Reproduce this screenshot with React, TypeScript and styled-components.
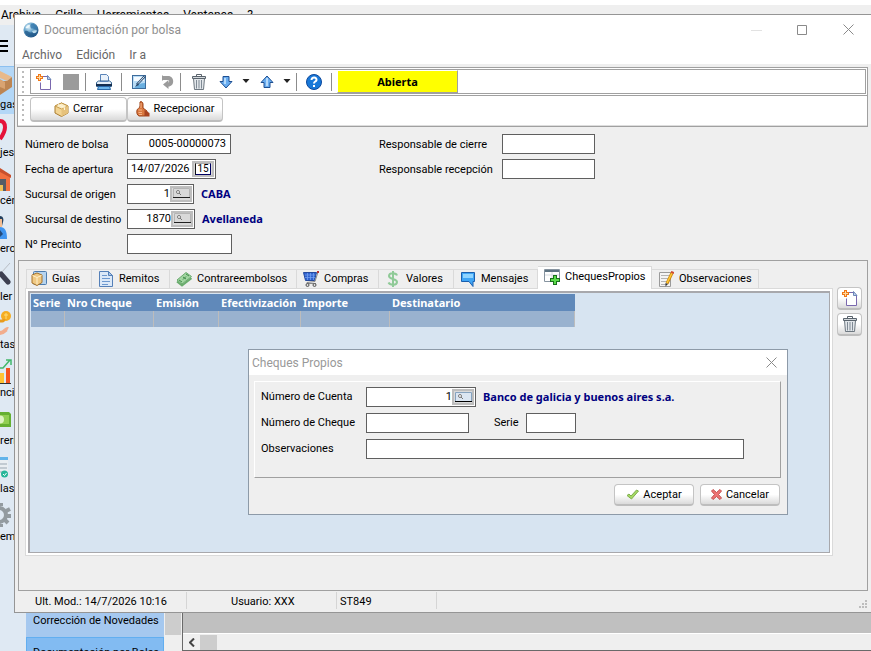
import React from "react";
import styled, { createGlobalStyle, css } from "styled-components";

const GlobalStyle = createGlobalStyle`
  * { box-sizing: border-box; }
  body { margin: 0; overflow: hidden; }
  button, input { font: inherit; color: inherit; }
`;

const uiFont = `Roboto, sans-serif`;
const boldFont = `"Noto Sans", sans-serif`;
const titleFont = `Roboto, sans-serif`;
const line = "#a0a0a0";

/* ---------- Main application shell ---------- */

const Shell = styled.div`
  position: relative;
  display: flex;
  flex-direction: column;
  height: 100vh;
  overflow: hidden;
  background: #efefef;
  color: #000;
  font: 11px/16px ${uiFont};
  white-space: nowrap;
`;

const TopStrip = styled.div`
  height: 5px;
  flex: none;
  background: #fff;
`;

const MainMenu = styled.nav`
  display: flex;
  flex: none;
  gap: 14px;
  height: 20px;
  padding: 1px;
  font: 12px/18px ${titleFont};
`;

const MenuLink = styled.button`
  padding: 0;
  border: 0;
  background: none;
  line-height: 18px;
`;

const Body = styled.div`
  display: flex;
  flex: 1;
  min-height: 0;
`;

const Sidebar = styled.nav`
  width: 26px;
  flex: none;
  background: #dfe9f3;
  overflow: hidden;
`;

const Burger = styled.button`
  display: flex;
  flex-direction: column;
  gap: 3px;
  width: 100%;
  height: 41px;
  padding: 15px 0 0;
  border: 0;
  background: none;
  i { width: 8px; height: 2px; background: #000; }
`;

const SideItem = styled.button<{ $active?: boolean }>`
  display: flex;
  flex-direction: column;
  align-items: flex-start;
  width: 100%;
  height: 48px;
  padding: 4px 0 0;
  border: 0;
  border-top: 1px solid ${(p) => (p.$active ? "#8cc0f0" : "transparent")};
  background: ${(p) => (p.$active ? "#b3d7f7" : "none")};
  line-height: 14px;
  svg { flex: none; }
`;

const Workspace = styled.div`
  display: flex;
  flex: 1;
  min-width: 0;
  align-items: flex-end;
`;

const TaskList = styled.div`
  width: 138px;
  height: 38px;
  flex: none;
  overflow: hidden;
`;

const TaskItem = styled.button<{ $selected?: boolean }>`
  display: flex;
  align-items: flex-start;
  width: 100%;
  height: 24px;
  padding: 0 7px;
  border: 0;
  background: #a5c8ef;
  ${(p) =>
    p.$selected &&
    css`
      border: 1px solid #62aef0;
      background: #82bbf2;
      padding: 7px 6px 0;
    `}
`;

const ListScroll = styled.div`
  width: 18px;
  height: 38px;
  flex: none;
  padding: 0 1px;
  &::before { content: ""; display: block; height: 22px; background: #cdcdcd; }
`;

const Canvas = styled.div`
  flex: 1;
  height: 38px;
  border-left: 1px solid #696969;
  border-bottom: 1px solid #696969;
  background: #c0c0c0;
  padding-top: 20px;
`;

const HScroll = styled.div`
  display: flex;
  align-items: center;
  height: 17px;
  border-top: 1px solid #fff;
  background: #efefef;
`;

const ScrollArrow = styled.button`
  display: flex;
  justify-content: center;
  width: 17px;
  padding: 0;
  border: 0;
  background: none;
`;

const ScrollThumb = styled.div`
  width: 17px;
  height: 15px;
  background: #cdcdcd;
`;

/* ---------- Document window ---------- */

const DocWindow = styled.section`
  position: absolute;
  top: 14px;
  left: 14px;
  right: 0;
  bottom: 38px;
  display: flex;
  flex-direction: column;
  border: 1px solid #959595;
  border-right: 0;
  background: #efefef;
`;

const TitleBar = styled.header`
  display: flex;
  align-items: center;
  flex: none;
  gap: 5px;
  height: 30px;
  padding: 0 17px 0 8px;
  background: #fff;
  color: #8f8f8f;
  font: 12px/16px ${titleFont};
`;

const TitleText = styled.h1`
  flex: 1;
  margin: 0;
  font: inherit;
`;

const WindowControls = styled.div`
  display: flex;
  gap: 34px;
`;

const ControlButton = styled.button`
  display: flex;
  padding: 0;
  border: 0;
  background: none;
  color: #8f8f8f;
`;

const WindowMenu = styled.nav`
  display: flex;
  flex: none;
  gap: 14px;
  height: 19px;
  padding-left: 7px;
  background: #fff;
  color: #666;
  font: 12px/19px ${titleFont};
`;

const Toolbars = styled.div`
  flex: none;
  margin: 3px 3px 0 2px;
  border: 1px solid ${line};
  background: #fff;
`;

const ToolRow = styled.div<{ $last?: boolean }>`
  display: flex;
  height: 28px;
  padding: 1px 1px 1px 3px;
  ${(p) => !p.$last && css`border-bottom: 1px solid ${line};`}
  ${(p) => p.$last && css`height: 30px; padding-bottom: 3px; border-bottom: 1px solid #ddd;`}
`;

const Grip = styled.i`
  width: 4px;
  margin: 2px 5px 1px 0;
  flex: none;
  background: repeating-linear-gradient(#bcbcbc 0 2px, transparent 2px 5px);
  background-size: 2px 100%;
  background-repeat: no-repeat;
  background-position: 1px 0;
`;

const ToolBox = styled.div`
  display: flex;
  align-items: center;
  flex: 1;
  border: 1px solid ${line};
`;

const ToolButton = styled.button<{ $w: number }>`
  display: flex;
  align-items: center;
  justify-content: center;
  width: ${(p) => p.$w}px;
  height: 22px;
  padding: 0;
  border: 0;
  background: none;
`;

const Separator = styled.i`
  width: 1px;
  height: 18px;
  background: #8c8c8c;
`;

const StatusBadge = styled.output`
  width: 121px;
  height: 23px;
  margin-left: 5px;
  border: 1px solid ${line};
  border-top-color: #fff;
  border-left-color: #fff;
  background: #ff0;
  font: bold 11px/22px ${boldFont};
  text-align: center;
`;

const SoftButton = styled.button<{ $w: number; $h: number }>`
  display: flex;
  align-items: center;
  justify-content: center;
  gap: 4px;
  width: ${(p) => p.$w}px;
  height: ${(p) => p.$h}px;
  padding: 0;
  border: 1px solid #c4c4c4;
  border-bottom: 2px solid #bdbdbd;
  border-radius: 4px;
  background: linear-gradient(#fff 50%, #dadada);
  line-height: 16px;
`;

const HeaderForm = styled.form`
  display: grid;
  grid-template-columns: 102px 252px 123px 1fr;
  grid-auto-rows: 25px;
  align-items: center;
  flex: none;
  margin: 4px 0 0 2px;
  padding: 0 8px 0 8px;
  > label { padding-top: 2px; }
`;

const Field = styled.div`
  display: flex;
  align-items: center;
  gap: 7px;
`;

const TextInput = styled.input<{ $w: number; $right?: boolean }>`
  width: ${(p) => p.$w}px;
  height: 20px;
  padding: 0 4px;
  border: 1px solid #5f5f5f;
  background: #fff;
  text-align: ${(p) => (p.$right ? "right" : "left")};
`;

const Combined = styled.span<{ $w: number }>`
  display: flex;
  align-items: center;
  width: ${(p) => p.$w}px;
  height: 20px;
  padding-right: 1px;
  border: 1px solid #5f5f5f;
  background: #fff;
`;

const BareInput = styled.input<{ $right?: boolean }>`
  flex: 1;
  min-width: 0;
  width: 0;
  height: 16px;
  padding: 0 0 0 ${(p) => (p.$right ? 0 : 3)}px;
  border: 0;
  background: transparent;
  text-align: ${(p) => (p.$right ? "right" : "left")};
`;

const InnerButton = styled.button`
  display: flex;
  align-items: center;
  justify-content: center;
  width: 22px;
  height: 16px;
  padding: 0;
  border: 2px solid #bebebe;
  background: #dadada;
`;

const Bound = styled.strong`
  color: #000080;
  font: bold 11px/16px ${boldFont};
`;

const TabFrame = styled.div`
  display: flex;
  flex: 1;
  min-height: 0;
  gap: 4px;
  margin: 4px 3px 1px 3px;
  padding: 5px 5px 34px 6px;
  border: 1px solid ${line};
`;

const TabArea = styled.div`
  display: flex;
  flex-direction: column;
  flex: 1;
  min-width: 0;
`;

const TabStrip = styled.div`
  display: flex;
  align-items: flex-end;
  flex: none;
  height: 22px;
  padding-left: 1px;
`;

const Tab = styled.button<{ $w: number; $active?: boolean }>`
  display: flex;
  align-items: center;
  gap: 5px;
  width: ${(p) => p.$w}px;
  height: 19px;
  padding: 0 0 0 6px;
  border: 1px solid #dadada;
  border-width: 1px 1px 0 0;
  background: #efefef;
  line-height: 16px;
  &:first-child { border-left-width: 1px; padding-left: 4px; }
  ${(p) =>
    p.$active &&
    css`
      height: 23px;
      margin-bottom: -1px;
      padding-bottom: 2px;
      background: #fff;
      z-index: 1;
    `}
`;

const TabIcon = styled.span`
  display: flex;
  justify-content: center;
  width: 16px;
  flex: none;
`;

const TabPage = styled.div`
  flex: 1;
  min-height: 0;
  padding: 2px;
  border: 1px solid #dadada;
  background: #fff;
`;

const Grid = styled.div`
  height: 100%;
  padding: 1px;
  border: 1px solid #a8a8ac;
  border-width: 2px 1px 1px 2px;
  background: #d7e4f1;
`;

const Table = styled.table`
  width: 544px;
  border-collapse: separate;
  border-spacing: 0;
  table-layout: fixed;
`;

const HeadCell = styled.th`
  height: 17px;
  padding: 0 0 0 2px;
  background: #6089ba;
  color: #fff;
  font: bold 11px/17px ${boldFont};
  text-align: left;
`;

const Cell = styled.td`
  height: 16px;
  padding: 0;
  border-right: 1px solid #bcbcbc;
  background: #99b2cf;
`;

const SideActions = styled.div`
  display: flex;
  flex-direction: column;
  gap: 3px;
  padding-top: 21px;
`;

const StatusBar = styled.footer`
  display: grid;
  grid-template-columns: 152px 150px 100px 1fr;
  flex: none;
  height: 20px;
  margin: 0 4px 0 20px;
`;

const StatusCell = styled.span<{ $pad?: number }>`
  height: 17px;
  padding-left: ${(p) => p.$pad ?? 0}px;
  border-right: 1px solid #d5d5d5;
  line-height: 20px;
`;

const SizeGrip = styled.span`
  display: flex;
  justify-content: flex-end;
  align-items: flex-end;
  padding-bottom: 4px;
`;

/* ---------- Dialog ---------- */

const Dialog = styled.section`
  position: absolute;
  top: 349px;
  left: 248px;
  width: 540px;
  border: 1px solid #8d9aa8;
  background: #efefef;
`;

const DialogTitle = styled.header`
  display: flex;
  align-items: center;
  justify-content: space-between;
  height: 25px;
  padding: 0 10px 0 3px;
  background: #fff;
  color: #999;
  font: 12px/16px ${titleFont};
`;

const DialogHeading = styled.h2`
  margin: 0;
  font: inherit;
`;

const Panel = styled.div`
  display: grid;
  grid-template-columns: 105px 1fr;
  grid-auto-rows: 26px;
  align-items: center;
  margin: 6px 6px 0 5px;
  padding: 2px 6px 15px;
  border: 1px solid ${line};
  border-top-color: #fff;
  border-left-color: #fff;
`;

const SeriesLabel = styled.label`
  margin-left: 18px;
`;

const Actions = styled.div`
  display: flex;
  justify-content: flex-end;
  gap: 6px;
  padding: 6px 7px 8px;
`;

/* ---------- Icons ---------- */

const Svg = ({ w = 16, h = w, children }: { w?: number; h?: number; children: React.ReactNode }) => (
  <svg width={w} height={h} viewBox={`0 0 ${w} ${h}`} fill="none" aria-hidden="true">{children}</svg>
);

const GlobeIcon = () => (
  <Svg>
    <defs>
      <radialGradient id="globe" cx=".35" cy=".3" r=".8">
        <stop offset="0" stopColor="#e4f3fa" /><stop offset=".4" stopColor="#6da9cf" /><stop offset="1" stopColor="#0f4478" />
      </radialGradient>
    </defs>
    <circle cx="8" cy="8" r="7.5" fill="url(#globe)" />
    <path d="M2 9c3-1 4 2 6 1.500s4-.5 5 1c-2 3-5 3.500-8 2S2 11 2 9z" fill="#1d5688" opacity=".7" />
    <path d="M8 2c3-1 6 2 6 5-3 .5-4-1-6-.5-1-2-1-3.500 0-4.500z" fill="#3578ad" opacity=".8" />
    <path d="M2.500 6c1-2.500 2.500-3.500 4.500-3-1 2.500-2 3.500-4.500 3z" fill="#eef8fc" />
    <path d="M9 9c2-1 3-1 5-.5-.5 2-2 3-4 2.500z" fill="#b6d8ea" />
  </Svg>
);

const NewIcon = () => (
  <Svg>
    <path d="M5.500 2.500h6l3 3v10h-10v-7" fill="#fff" stroke="#7a68ae" />
    <path d="M11.500 1.500v4h3.500z" fill="#c4d3ef" stroke="#6b86b8" />
    <path d="M3.500 0v7M0 3.500h7" stroke="#f07818" strokeWidth="3" />
    <path d="M3.500 1v5M1 3.500h5" stroke="#ffd9a0" />
  </Svg>
);

const PrintIcon = () => (
  <Svg>
    <path d="M4.500 8V.5h6l2 2V8" fill="#eaf2fb" stroke="#5a84b8" />
    <path d="M.5 8.500l2-1.500h11l2 1.500v4H.5z" fill="#e3edf7" stroke="#31608f" />
    <path d="M0 11h16" stroke="#142e50" strokeWidth="2" />
    <path d="M2.500 12.500h11l1 3h-13z" fill="#6db6ec" stroke="#2a68a8" />
    <path d="M4 7.500h8" stroke="#5a84b8" />
  </Svg>
);

const EditIcon = () => (
  <Svg>
    <rect x="1.500" y="1.500" width="13" height="13" fill="#b9dcf5" stroke="#3d6c9c" />
    <path d="M3 3h10v4H3z" fill="#f4faff" />
    <path d="M2 14c4 0 4-5 12-5v5H2z" fill="#69afe0" />
    <path d="M14 2 6 10.500" stroke="#26486e" strokeWidth="2.500" />
    <path d="M6.500 9 4 13l4-2z" fill="#26486e" />
    <path d="M13.500 2.500 7 9.500" stroke="#dcecf8" />
  </Svg>
);

const UndoIcon = () => (
  <Svg w={14} h={15}>
    <path d="M2 4h6a3.500 3.500 0 0 1 0 6.500H6" stroke="#9b9b9b" strokeWidth="4" />
    <path d="M7.500 6v9L2 10.500z" fill="#9b9b9b" />
    <path d="M1 1v6l3-3z" fill="#9b9b9b" />
  </Svg>
);

const TrashIcon = () => (
  <Svg>
    <path d="M2.500 4.500h11l-1 11h-9z" fill="#e2e6ea" stroke="#6d7780" />
    <path d="M5.500 6v8.500M8 6v8.500M10.500 6v8.500" stroke="#7f8a94" />
    <path d="M1.500 2.500h13v2h-13z" fill="#d3d8dc" stroke="#59636c" />
    <path d="M5.500 2.500v-2h5v2" stroke="#59636c" />
  </Svg>
);

const ArrowIcon = ({ up }: { up?: boolean }) => (
  <Svg w={14} h={14}>
    <path
      d={up ? "M7 1l6 6.500h-3v5H4v-5H1z" : "M7 13l6-6.500h-3v-5H4v5H1z"}
      fill="#69adf0"
      stroke="#1e4f92"
    />
    <path d={up ? "M7 3v8" : "M6 3v6"} stroke="#b5dafc" strokeWidth="2" />
  </Svg>
);

const CaretIcon = () => (
  <Svg w={8} h={5}><path d="M.5 0h7L4 4z" fill="#222" /></Svg>
);

const HelpIcon = () => (
  <Svg>
    <circle cx="8" cy="8" r="7.500" fill="#1878d8" stroke="#0c489c" />
    <path d="M5.500 6c0-3.500 5.500-3 5 0-.3 1.700-2.500 1.500-2.500 3.500M8 11v2" stroke="#fff" strokeWidth="2" />
  </Svg>
);

const BoxIcon = () => (
  <Svg w={15} h={15}>
    <path d="M7.500 1 14 4v7l-6.500 3.500L1 11V4z" fill="#f2d493" stroke="#a97c2f" />
    <path d="M1 4l6.500 3L14 4 7.500 1z" fill="#fbecc4" stroke="#c79c4c" />
    <path d="M7.500 7v7.500L14 11V4z" fill="#e6c27c" />
    <path d="M4 2.500l6.500 3V8" stroke="#fff7dc" />
  </Svg>
);

const ThumbIcon = () => (
  <Svg w={14} h={16}>
    <path d="M4 1c1-1 3 0 3 2v4l4 3v4l-3 1H3c-2-1-2.500-3-2-6 0-1 3-2 3-4z" fill="#d9783f" stroke="#9c4218" />
    <path d="M5 2v5M2.500 9H6M2.500 11.500H6M3 13.500h3" stroke="#f7b286" />
    <path d="M8.500 9l5 3v3.500h-5z" fill="#a8431f" />
  </Svg>
);

const SearchIcon = ({ bright }: { bright?: boolean }) => (
  <Svg w={17} h={11}>
    <path d="M0 0h17v9H0z" fill={bright ? "#dbe6f2" : "#d9d9d9"} />
    <path d="M.5 9V.5h16V9" stroke={bright ? "#86a3bf" : "#b4b4b4"} />
    <path d="M0 9.500h17" stroke={bright ? "#000" : "#222"} />
    <circle cx="5" cy="4" r="1.500" fill="#fff" stroke="#777" />
    <path d="M6 5l2 2" stroke="#777" />
  </Svg>
);

const CalendarButton = styled(InnerButton)`
  font: 10px/11px ${uiFont};
  b {
    height: 12px;
    padding: 0 1px;
    border: 1px solid #111;
    border-color: #aaa #000060 #000060 #111;
    background: #fff;
    font-weight: 400;
    line-height: 10px;
  }
`;

const GuideIcon = () => (
  <Svg>
    <rect x="2.500" y=".5" width="13" height="13" rx="1" fill="#b6d4ef" stroke="#4d7cae" />
    <path d="M6 2 11 4v7.500L6 14.500 1 12V4z" fill="#f0c983" stroke="#a6722a" />
    <path d="M1.500 4.500 6 6.500l4.500-2M6 6.500v7" stroke="#fff0cb" />
  </Svg>
);

const DocIcon = () => (
  <Svg w={14} h={16}>
    <path d="M.5.5h9l4 4v11H.5z" fill="#dce9f8" stroke="#5580b8" />
    <path d="M9.500.5v4h4z" fill="#a9c6ea" stroke="#5580b8" />
    <path d="M3 4.500h5M3 7.500h8M3 10.500h8M3 13.500h6" stroke="#6d98cf" />
  </Svg>
);

const CashIcon = () => (
  <Svg>
    <path d="M1 9 10 1.500l5.500 4L6 13z" fill="#a2d5a2" stroke="#6aab6e" />
    <path d="M1 10.500l5 4 9.500-7.500" stroke="#69ac6d" strokeWidth="2" />
    <path d="M3 9l3 2M10 3l3 2M7 6l3 2M7 8.500l3-3" stroke="#3f8c49" />
  </Svg>
);

const CartIcon = () => (
  <Svg>
    <path d="M.5 1.500h13l-2 8h-9z" fill="#2f62cf" stroke="#264b9e" />
    <path d="M2 4h10M2 6.500h10M4.500 2v7M7.500 2v7M10.500 2v7" stroke="#7aa5f2" strokeWidth=".7" />
    <path d="M15 1l-3 9.500-8 1v1h9" stroke="#888" />
    <circle cx="4.500" cy="14" r="1.500" fill="#ddd" stroke="#555" />
    <circle cx="11.500" cy="14" r="1.500" fill="#ddd" stroke="#555" />
    <path d="M14 0h2v2h-2z" fill="#b33" />
  </Svg>
);

const DollarIcon = () => (
  <Svg w={12} h={16}>
    <path d="M10 4.500C9 1.500 2 1.500 2 5s8 2.500 8 6-7 3.500-8.500.5M6 0v16" stroke="#8fca97" strokeWidth="2" />
  </Svg>
);

const MessageIcon = () => (
  <Svg w={14} h={16}>
    <path d="M.5 1.500h13v9H12v5l-4-5H.5z" fill="#3fa5f5" stroke="#1a5fae" />
    <path d="M2 3h10v4H2z" fill="#8fd4ff" />
  </Svg>
);

const AddTableIcon = () => (
  <Svg>
    <path d="M.5.5h15v12H.5z" fill="#fff" stroke="#8794a0" />
    <path d="M1 2h14" stroke="#5e7382" strokeWidth="2" />
    <path d="M1 6h14M8 3v9" stroke="#d5dbe0" />
    <path d="M11 6v10M6 11h10" stroke="#19701c" strokeWidth="4" />
    <path d="M11 7v8M7 11h8" stroke="#5bdc4a" strokeWidth="2" />
  </Svg>
);

const NoteIcon = () => (
  <Svg w={15} h={16}>
    <path d="M.5 1.500h11v14H.5z" fill="#f4f4f4" stroke="#9a9a9a" />
    <path d="M2 4.500h8M2 7.500h8M2 10.500h6M2 13.500h5" stroke="#b4b4b4" />
    <path d="M13 2 8 12.500" stroke="#c98412" strokeWidth="3" />
    <path d="M13 2 8 12" stroke="#ffca35" strokeWidth="1.500" />
    <path d="M6.500 15.500l0-3.500 2.500 1z" fill="#333" />
    <path d="M12 .8l3 1.300" stroke="#d04a32" strokeWidth="2" />
  </Svg>
);

const CheckIcon = () => (
  <Svg w={13} h={11}>
    <path d="M1 6.500 3 5l2 2L10.500 1l2 1L5.500 10z" fill="#a5d964" stroke="#7fae4e" />
  </Svg>
);

const CrossIcon = () => (
  <Svg w={11} h={11}>
    <path d="M.5 2 2 .5l3.500 3L9 .5 10.500 2l-3 3.500 3 3.500L9 10.500l-3.500-3-3.500 3L.5 9l3-3.500z" fill="#ee7474" stroke="#c25050" />
  </Svg>
);

const CloseIcon = () => (
  <Svg w={11} h={11}><path d="M.5.5l10 10M10.500.5l-10 10" stroke="#8a8a8a" /></Svg>
);

/* Launcher drawings: only the right part of each is inside the narrow rail. */
const SideArt = ({ kind }: { kind: string }) => (
  <Svg w={14} h={27}>
    {kind === "box" && (<>
      <path d="M0 0l12 6-5 4L0 7z" fill="#e8b98a" /><path d="M12 6v10L0 24V10l7 0z" fill="#bd8552" /><path d="M0 8l5 3v7l-5-2z" fill="#d9a371" />
    </>)}
    {kind === "pin" && <path d="M0 2c4 0 5 3 5 6.500S3 16 0 20" stroke="#e5123a" strokeWidth="4" />}
    {kind === "house" && (<>
      <path d="M0 3l10 5v16H0z" fill="#f2703f" /><path d="M0 1l11 7v3L0 5z" fill="#c9502c" /><path d="M0 12h6v12H0z" fill="#555c66" /><path d="M0 18h3v6H0z" fill="#edc056" />
    </>)}
    {kind === "person" && (<>
      <path d="M0 1c3 0 4 3 3 6l-1 4H0z" fill="#24405f" /><path d="M0 4h2v8H0z" fill="#f3bd91" /><path d="M0 12c5 0 7 4 7 12H0z" fill="#3e94ef" /><path d="M0 15l3 4-3 3z" fill="#234a7a" />
    </>)}
    {kind === "tool" && (<>
      <path d="M1 10 10 0" stroke="#b8bdc4" /><path d="M1 11l7 8" stroke="#3d4051" strokeWidth="5" strokeLinecap="round" />
    </>)}
    {kind === "coins" && (<>
      <circle cx="6" cy="5" r="5" fill="#f6ad20" /><path d="M6 2v6M4 4h4" stroke="#ffdd75" /><path d="M0 10c3 0 4 0 4-2" stroke="#e89b1d" strokeWidth="3" /><path d="M0 22c5 0 6-5 8-4" stroke="#f2ad8d" strokeWidth="4" />
    </>)}
    {kind === "chart" && (<>
      <path d="M0 14h4v10H0z" fill="#ffc233" /><path d="M6 9h4v15H6z" fill="#f4511e" /><path d="M0 24.500h11" stroke="#333" /><path d="M0 9l3 0L10 1M6 1h5v5" stroke="#43b86b" strokeWidth="1.500" />
    </>)}
    {kind === "money" && (<>
      <path d="M0 5h9l2 2v13H0z" fill="#66b032" /><path d="M0 8h9v9H0z" fill="#91cf52" /><circle cx="0" cy="12.500" r="4" fill="#dff3c4" />
    </>)}
    {kind === "list" && (<>
      <path d="M0 2h8v20H0z" fill="#e9eef2" /><path d="M0 2h8v3H0z" fill="#62b4ea" /><path d="M0 9h7M0 13h7M0 17h4" stroke="#9aa7b2" /><circle cx="4.500" cy="19" r="3.500" fill="#26b69a" /><path d="M3 19l1.500 1.500L6.500 18" stroke="#fff" />
    </>)}
    {kind === "gear" && (<>
      <circle cx="-1" cy="12" r="7" stroke="#939ba0" strokeWidth="4" /><path d="M6 8l4-2M7 13h4M5 17l3 3M1 3V0M1 21v3" stroke="#939ba0" strokeWidth="4" />
    </>)}
  </Svg>
);

const launchers = [
  ["box", "gas"], ["pin", "jes"], ["house", "cén"], ["person", "ero"], ["tool", "ler"],
  ["coins", "tas"], ["chart", "ncia"], ["money", "rerí"], ["list", "las"], ["gear", "ema"],
];

const tabs: [string, number, React.ReactNode][] = [
  ["Guías", 66, <GuideIcon />],
  ["Remitos", 78, <DocIcon />],
  ["Contrareembolsos", 127, <CashIcon />],
  ["Compras", 82, <CartIcon />],
  ["Valores", 75, <DollarIcon />],
  ["Mensajes", 84, <MessageIcon />],
  ["ChequesPropios", 114, <AddTableIcon />],
  ["Observaciones", 107, <NoteIcon />],
];

const columns: [string, number][] = [
  ["Serie", 34], ["Nro Cheque", 89], ["Emisión", 65], ["Efectivización", 82], ["Importe", 89], ["Destinatario", 185],
];

const Lookup = ({ id, value, width, bright }: { id: string; value: string; width: number; bright?: boolean }) => (
  <Combined $w={width}>
    <BareInput id={id} defaultValue={value} $right />
    <InnerButton type="button" aria-label="Buscar"><SearchIcon bright={bright} /></InnerButton>
  </Combined>
);

export default function App() {
  return (
    <Shell>
      <GlobalStyle />
      <TopStrip />
      <MainMenu>
        {["Archivo", "Grilla", "Herramientas", "Ventanas", "?"].map((m) => <MenuLink key={m}>{m}</MenuLink>)}
      </MainMenu>
      <Body>
        <Sidebar>
          <Burger aria-label="Menú"><i /><i /><i /></Burger>
          {launchers.map(([kind, text], i) => (
            <SideItem key={kind} $active={i === 0}><SideArt kind={kind} />{text}</SideItem>
          ))}
        </Sidebar>
        <Workspace>
          <TaskList>
            <TaskItem>Corrección de Novedades</TaskItem>
            <TaskItem $selected>Documentación por Bolsa</TaskItem>
          </TaskList>
          <ListScroll />
          <Canvas>
            <HScroll>
              <ScrollArrow aria-label="Desplazar a la izquierda">
                <Svg w={6} h={9}><path d="M5 .5l-4 4 4 4" stroke="#444" strokeWidth="2" /></Svg>
              </ScrollArrow>
              <ScrollThumb />
            </HScroll>
          </Canvas>
        </Workspace>
      </Body>

      <DocWindow>
        <TitleBar>
          <GlobeIcon />
          <TitleText>Documentación por bolsa</TitleText>
          <WindowControls>
            <ControlButton aria-label="Minimizar"><Svg w={12} h={12}><path d="M0 6.500h11" stroke="#e2e2e2" /></Svg></ControlButton>
            <ControlButton aria-label="Maximizar"><Svg w={12} h={12}><path d="M.5 1.500h9v9h-9z" stroke="#8a8a8a" /></Svg></ControlButton>
            <ControlButton aria-label="Cerrar ventana"><CloseIcon /></ControlButton>
          </WindowControls>
        </TitleBar>
        <WindowMenu>
          {["Archivo", "Edición", "Ir a"].map((m) => <MenuLink key={m}>{m}</MenuLink>)}
        </WindowMenu>

        <Toolbars>
          <ToolRow>
            <Grip />
            <ToolBox>
              <ToolButton $w={26} aria-label="Nuevo"><NewIcon /></ToolButton>
              <ToolButton $w={28} aria-label="Detener"><Svg><path d="M0 0h16v16H0z" fill="#9b9b9b" /></Svg></ToolButton>
              <Separator />
              <ToolButton $w={35} aria-label="Imprimir"><PrintIcon /></ToolButton>
              <Separator />
              <ToolButton $w={34} aria-label="Editar"><EditIcon /></ToolButton>
              <ToolButton $w={24} aria-label="Deshacer"><UndoIcon /></ToolButton>
              <Separator />
              <ToolButton $w={35} aria-label="Eliminar"><TrashIcon /></ToolButton>
              <ToolButton $w={20} aria-label="Siguiente"><ArrowIcon /></ToolButton>
              <ToolButton $w={19} aria-label="Opciones de siguiente"><CaretIcon /></ToolButton>
              <ToolButton $w={23} aria-label="Anterior"><ArrowIcon up /></ToolButton>
              <ToolButton $w={18} aria-label="Opciones de anterior"><CaretIcon /></ToolButton>
              <Separator />
              <ToolButton $w={34} aria-label="Ayuda"><HelpIcon /></ToolButton>
              <Separator />
              <StatusBadge>Abierta</StatusBadge>
            </ToolBox>
          </ToolRow>
          <ToolRow $last>
            <Grip />
            <SoftButton $w={97} $h={25}><BoxIcon />Cerrar</SoftButton>
            <SoftButton $w={96} $h={25}><ThumbIcon />Recepcionar</SoftButton>
          </ToolRow>
        </Toolbars>

        <HeaderForm onSubmit={(e) => e.preventDefault()}>
          <label htmlFor="bolsa">Número de bolsa</label>
          <Field><TextInput id="bolsa" $w={104} $right defaultValue="0005-00000073" /></Field>
          <label htmlFor="cierre">Responsable de cierre</label>
          <Field><TextInput id="cierre" $w={93} /></Field>

          <label htmlFor="fecha">Fecha de apertura</label>
          <Field>
            <Combined $w={89}>
              <BareInput id="fecha" defaultValue="14/07/2026" />
              <CalendarButton type="button" aria-label="Calendario"><b>15</b></CalendarButton>
            </Combined>
          </Field>
          <label htmlFor="recepcion">Responsable recepción</label>
          <Field><TextInput id="recepcion" $w={93} /></Field>

          <label htmlFor="origen">Sucursal de origen</label>
          <Field><Lookup id="origen" value="1" width={67} /><Bound>CABA</Bound></Field>
          <span /><span />

          <label htmlFor="destino">Sucursal de destino</label>
          <Field><Lookup id="destino" value="1870" width={68} /><Bound>Avellaneda</Bound></Field>
          <span /><span />

          <label htmlFor="precinto">Nº Precinto</label>
          <Field><TextInput id="precinto" $w={105} /></Field>
        </HeaderForm>

        <TabFrame>
          <TabArea>
            <TabStrip role="tablist">
              {tabs.map(([name, w, icon]) => (
                <Tab key={name} role="tab" $w={w} $active={name === "ChequesPropios"} aria-selected={name === "ChequesPropios"}>
                  <TabIcon>{icon}</TabIcon>{name}
                </Tab>
              ))}
            </TabStrip>
            <TabPage>
              <Grid>
                <Table>
                  <colgroup>{columns.map(([c, w]) => <col key={c} width={w} />)}</colgroup>
                  <thead><tr>{columns.map(([c]) => <HeadCell key={c}>{c}</HeadCell>)}</tr></thead>
                  <tbody><tr>{columns.map(([c]) => <Cell key={c} />)}</tr></tbody>
                </Table>
              </Grid>
            </TabPage>
          </TabArea>
          <SideActions>
            <SoftButton $w={25} $h={23} aria-label="Agregar cheque"><NewIcon /></SoftButton>
            <SoftButton $w={25} $h={23} aria-label="Quitar cheque"><TrashIcon /></SoftButton>
          </SideActions>
        </TabFrame>

        <StatusBar>
          <StatusCell>Ult. Mod.: 14/7/2026 10:16</StatusCell>
          <StatusCell $pad={44}>Usuario: XXX</StatusCell>
          <StatusCell $pad={3}>ST849</StatusCell>
          <SizeGrip>
            <Svg w={8} h={8}><path d="M6 0h2v2H6zM6 3h2v2H6zM6 6h2v2H6zM3 3h2v2H3zM3 6h2v2H3zM0 6h2v2H0z" fill="#bdbdbd" /></Svg>
          </SizeGrip>
        </StatusBar>
      </DocWindow>

      <Dialog role="dialog" aria-labelledby="dlg-title">
        <DialogTitle>
          <DialogHeading id="dlg-title">Cheques Propios</DialogHeading>
          <ControlButton aria-label="Cerrar diálogo"><CloseIcon /></ControlButton>
        </DialogTitle>
        <Panel>
          <label htmlFor="cuenta">Número de Cuenta</label>
          <Field><Lookup id="cuenta" value="1" width={110} bright /><Bound>Banco de galicia y buenos aires s.a.</Bound></Field>
          <label htmlFor="cheque">Número de Cheque</label>
          <Field>
            <TextInput id="cheque" $w={103} />
            <SeriesLabel htmlFor="serie">Serie</SeriesLabel>
            <TextInput id="serie" $w={50} />
          </Field>
          <label htmlFor="obs">Observaciones</label>
          <Field><TextInput id="obs" $w={378} /></Field>
        </Panel>
        <Actions>
          <SoftButton $w={80} $h={22}><CheckIcon />Aceptar</SoftButton>
          <SoftButton $w={80} $h={22}><CrossIcon />Cancelar</SoftButton>
        </Actions>
      </Dialog>
    </Shell>
  );
}
